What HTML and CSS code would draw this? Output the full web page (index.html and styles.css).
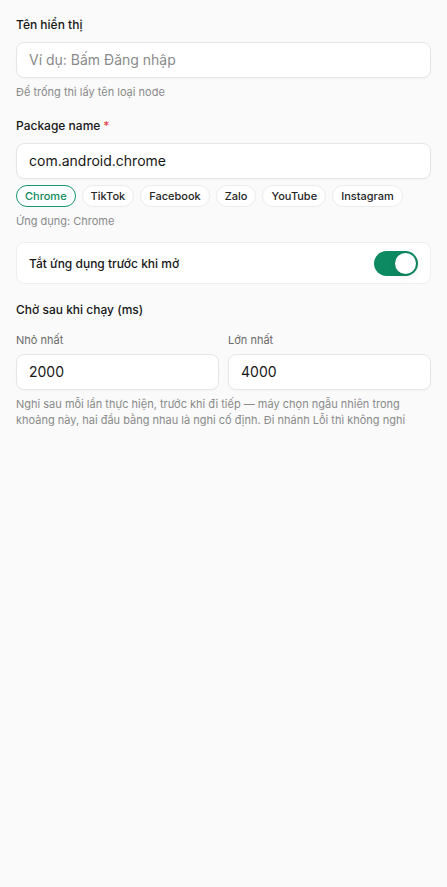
FILE: index.html
```html
<!DOCTYPE html>
<html lang="vi">
<head>
<meta charset="utf-8">
<link rel="stylesheet" href="styles.css">
</head>
<body>
<div class="form">
  <div class="field">
    <div class="label">Tên hiển thị</div>
    <div class="input placeholder">Ví dụ: Bấm Đăng nhập</div>
    <div class="help">Để trống thì lấy tên loại node</div>
  </div>
  <div class="field">
    <div class="label">Package name<span class="req">*</span></div>
    <div class="input">com.android.chrome</div>
    <div class="chips">
      <span class="chip active">Chrome</span>
      <span class="chip">TikTok</span>
      <span class="chip">Facebook</span>
      <span class="chip">Zalo</span>
      <span class="chip">YouTube</span>
      <span class="chip">Instagram</span>
    </div>
    <div class="help">Ứng dụng: Chrome</div>
  </div>
  <div class="card">
    <span class="card-text">Tắt ứng dụng trước khi mở</span>
    <span class="toggle"><span class="knob"></span></span>
  </div>
  <div class="field">
    <div class="label">Chờ sau khi chạy (ms)</div>
    <div class="grid">
      <div class="col">
        <div class="sublabel">Nhỏ nhất</div>
        <div class="input">2000</div>
      </div>
      <div class="col">
        <div class="sublabel">Lớn nhất</div>
        <div class="input">4000</div>
      </div>
    </div>
    <div class="help">Nghi sau mỗi lần thực hiện, trước khi đi tiếp — máy chọn ngẫu nhiên trong khoảng này, hai đầu bằng nhau là nghi cố định. Đi nhánh Lỗi thì không nghỉ</div>
  </div>
</div>
</body>
</html>
```
FILE: styles.css
```css
html, body {
  margin: 0;
  padding: 0;
  background: #fafafa;
  font-family: Inter, "Noto Sans", sans-serif;
  color: #171717;
}
.form {
  padding: 16px 16px;
}
.field {
  margin-bottom: 17px;
}
.label {
  font-size: 12px;
  font-weight: 500;
  line-height: 18px;
  margin-bottom: 8px;
  color: #171717;
}
.req {
  color: #e5484d;
  margin-left: 3px;
}
.input {
  box-sizing: border-box;
  height: 36px;
  border: 1px solid #e6e6e6;
  border-radius: 8px;
  background: #fff;
  padding: 0 12px;
  font-size: 14px;
  line-height: 34px;
  color: #171717;
  box-shadow: 0 1px 2px rgba(0,0,0,0.03);
}
.input.placeholder {
  color: #8a8a8a;
}
.help {
  margin-top: 6px;
  font-size: 11px;
  line-height: 16px;
  color: #8a8a8a;
}
.chips {
  display: flex;
  flex-wrap: wrap;
  gap: 6px;
  margin-top: 6px;
}
.chip {
  box-sizing: border-box;
  height: 22px;
  padding: 0 8px;
  border: 1px solid #ececec;
  border-radius: 11px;
  background: #fff;
  font-size: 11px;
  font-weight: 500;
  line-height: 20px;
  color: #262626;
}
.chip.active {
  border-color: #14976a;
  color: #0f8a60;
}
.field:nth-child(2) {
  margin-bottom: 13px;
}
.card {
  box-sizing: border-box;
  height: 42px;
  border: 1px solid #eeeeee;
  border-radius: 8px;
  background: #fff;
  display: flex;
  align-items: center;
  justify-content: space-between;
  padding: 0 12px;
  margin-bottom: 17px;
}
.card-text {
  font-size: 12px;
  font-weight: 500;
  color: #171717;
}
.toggle {
  width: 44px;
  height: 25px;
  border-radius: 13px;
  background: #0e8a62;
  display: flex;
  align-items: center;
  justify-content: flex-end;
  padding: 0 2px;
  box-sizing: border-box;
}
.knob {
  width: 21px;
  height: 21px;
  border-radius: 50%;
  background: #fff;
  box-shadow: 0 2px 8px rgba(0,0,0,0.12);
}
.grid {
  display: grid;
  grid-template-columns: 1fr 1fr;
  gap: 9px;
  margin-top: 13px;
}
.sublabel {
  font-size: 11px;
  line-height: 16px;
  color: #6b6b6b;
  margin-bottom: 6px;
}
.field:last-child .label {
  margin-bottom: 0;
}
```
